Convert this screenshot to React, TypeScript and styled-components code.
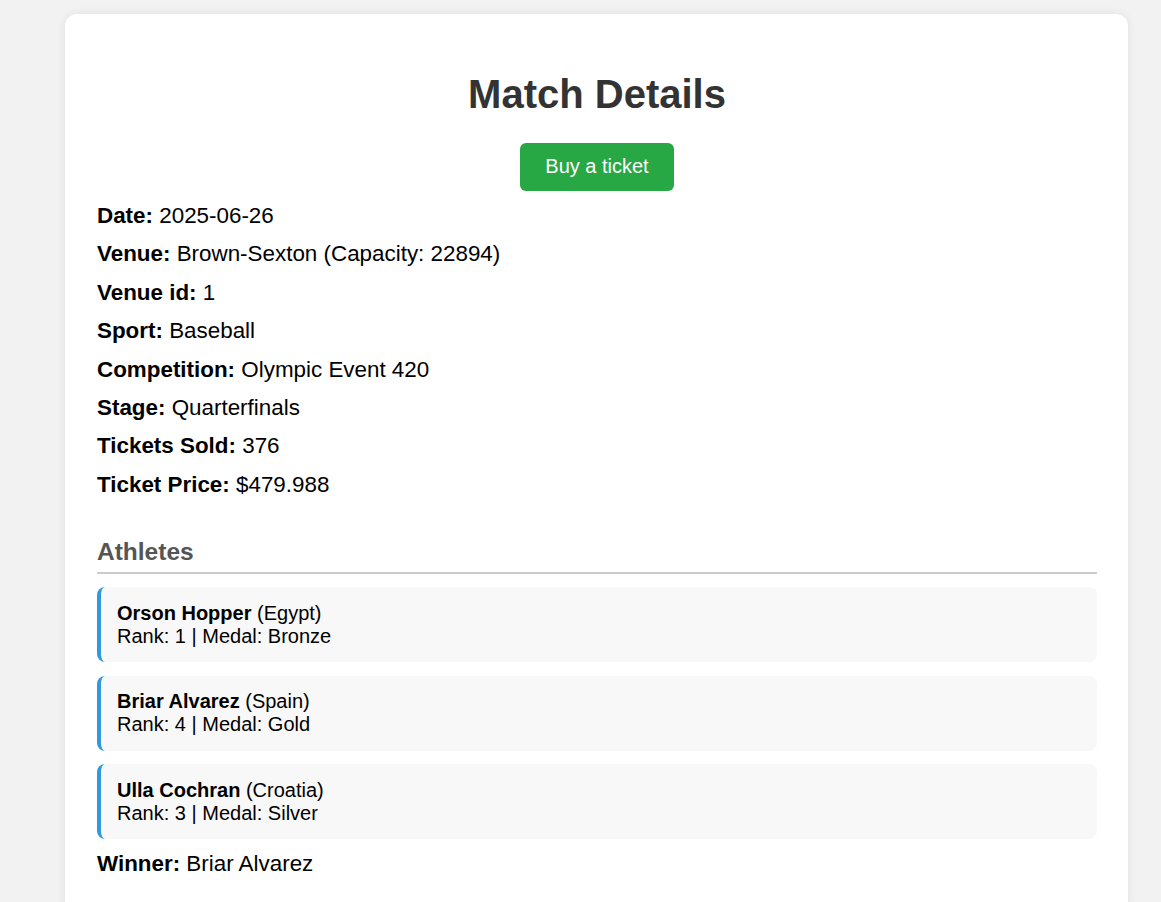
import React from "react";
import styled, { createGlobalStyle } from "styled-components";

const GlobalStyle = createGlobalStyle`
  html, body {
    margin: 0;
    padding: 0;
    background: #f2f2f2;
    font-family: "Liberation Sans", Arial, sans-serif;
    color: #000;
  }
`;

const Page = styled.div`
  padding: 14px 0 0 65px;
  min-height: 902px;
  box-sizing: border-box;
`;

const Card = styled.main`
  width: 1000px;
  padding: 25px 31px 32px 32px;
  background: #fff;
  border-radius: 12px;
  box-shadow: 0 0 10px rgba(0, 0, 0, 0.08);
  display: flex;
  flex-direction: column;
`;

const Title = styled.h1`
  margin: 32px 0 26px;
  font-size: 40px;
  line-height: 46px;
  font-weight: 700;
  color: #333;
  text-align: center;
`;

const BuyButton = styled.button`
  align-self: center;
  margin: 0 0 6px;
  padding: 12px 25px 13px;
  font-family: inherit;
  font-size: 20px;
  line-height: 23px;
  color: #fff;
  background: #28a745;
  border: none;
  border-radius: 6px;
  cursor: pointer;
`;

const DetailList = styled.div`
  display: flex;
  flex-direction: column;
`;

const DetailRow = styled.p`
  margin: 0;
  font-size: 22.4px;
  line-height: 38.4px;
  color: #000;
`;

const SectionTitle = styled.h2`
  margin: 34px 0 13px;
  padding-bottom: 6px;
  font-size: 24.5px;
  line-height: 28px;
  font-weight: 700;
  color: #555;
  border-bottom: 2px solid #ccc;
`;

const AthleteList = styled.div`
  display: flex;
  flex-direction: column;
  gap: 13.5px;
  margin-bottom: 5.4px;
`;

const AthleteCard = styled.div`
  padding: 14.5px 16px;
  background: #f8f8f8;
  border-left: 4px solid #3498db;
  border-radius: 8px;
  font-size: 20px;
  line-height: 23px;
  color: #000;
`;

const Line = styled.div``;

const details: [string, string][] = [
  ["Date:", "2025-06-26"],
  ["Venue:", "Brown-Sexton (Capacity: 22894)"],
  ["Venue id:", "1"],
  ["Sport:", "Baseball"],
  ["Competition:", "Olympic Event 420"],
  ["Stage:", "Quarterfinals"],
  ["Tickets Sold:", "376"],
  ["Ticket Price:", "$479.988"],
];

const athletes = [
  { name: "Orson Hopper", country: "Egypt", rank: 1, medal: "Bronze" },
  { name: "Briar Alvarez", country: "Spain", rank: 4, medal: "Gold" },
  { name: "Ulla Cochran", country: "Croatia", rank: 3, medal: "Silver" },
];

export default function App() {
  return (
    <>
      <GlobalStyle />
      <Page>
        <Card>
          <Title>Match Details</Title>
          <BuyButton type="button">Buy a ticket</BuyButton>
          <DetailList>
            {details.map(([label, value]) => (
              <DetailRow key={label}>
                <strong>{label}</strong> {value}
              </DetailRow>
            ))}
          </DetailList>
          <SectionTitle>Athletes</SectionTitle>
          <AthleteList>
            {athletes.map((a) => (
              <AthleteCard key={a.name}>
                <Line>
                  <strong>{a.name}</strong> ({a.country})
                </Line>
                <Line>
                  Rank: {a.rank} | Medal: {a.medal}
                </Line>
              </AthleteCard>
            ))}
          </AthleteList>
          <DetailRow>
            <strong>Winner:</strong> Briar Alvarez
          </DetailRow>
        </Card>
      </Page>
    </>
  );
}
